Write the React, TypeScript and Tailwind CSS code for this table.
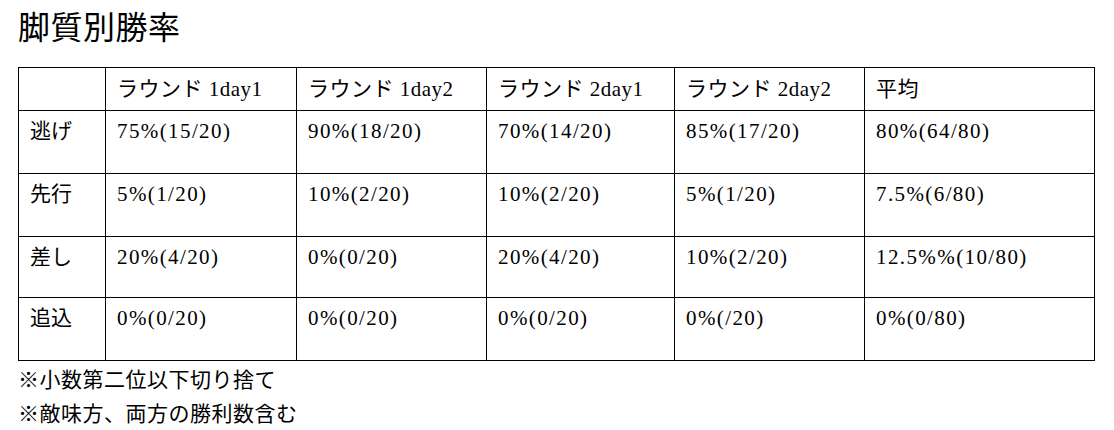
const font = { fontFamily: '"Liberation Serif", "Noto Sans CJK JP", serif' };

const header = ["", "ラウンド 1day1", "ラウンド 1day2", "ラウンド 2day1", "ラウンド 2day2", "平均"];

const rows = [
  { label: "逃げ", cells: ["75%(15/20)", "90%(18/20)", "70%(14/20)", "85%(17/20)", "80%(64/80)"], h: "h-[63px]" },
  { label: "先行", cells: ["5%(1/20)", "10%(2/20)", "10%(2/20)", "5%(1/20)", "7.5%(6/80)"], h: "h-[63px]" },
  { label: "差し", cells: ["20%(4/20)", "0%(0/20)", "20%(4/20)", "10%(2/20)", "12.5%%(10/80)"], h: "h-[61px]" },
  { label: "追込", cells: ["0%(0/20)", "0%(0/20)", "0%(0/20)", "0%(/20)", "0%(0/80)"], h: "h-[63px]" }
];

const widths = ["w-[87px]", "w-[191px]", "w-[190px]", "w-[188px]", "w-[190px]", "w-[230px]"];

export default function App() {
  return (
    <div className="w-[1114px] h-[430px] bg-white text-black px-[18px] pt-[8px]" style={font}>
      <h1 className="text-[32px] leading-[40px] font-normal mb-[19px] tracking-[0.5px]">脚質別勝率</h1>
      <table className="table-fixed border-collapse w-[1076px] text-[21px]">
        <colgroup>
          {widths.map((w, i) => (
            <col key={i} className={w} />
          ))}
        </colgroup>
        <thead>
          <tr className="h-[43px]">
            {header.map((h, i) => (
              <th key={i} className="border border-black align-top text-left font-normal px-[11px] pt-[6px] leading-[30px] tracking-[0.5px]">
                {h}
              </th>
            ))}
          </tr>
        </thead>
        <tbody>
          {rows.map((r) => (
            <tr key={r.label} className={r.h}>
              <td className="border border-black align-top px-[11px] pt-[5px] leading-[30px]">{r.label}</td>
              {r.cells.map((c, i) => (
                <td key={i} className="border border-black align-top px-[11px] pt-[5px] leading-[30px] tracking-[1.4px]">
                  {c}
                </td>
              ))}
            </tr>
          ))}
        </tbody>
      </table>
      <div className="text-[21px] leading-[34px] mt-[2px] tracking-[0.5px]">
        <p>※小数第二位以下切り捨て</p>
        <p>※敵味方、両方の勝利数含む</p>
      </div>
    </div>
  );
}
